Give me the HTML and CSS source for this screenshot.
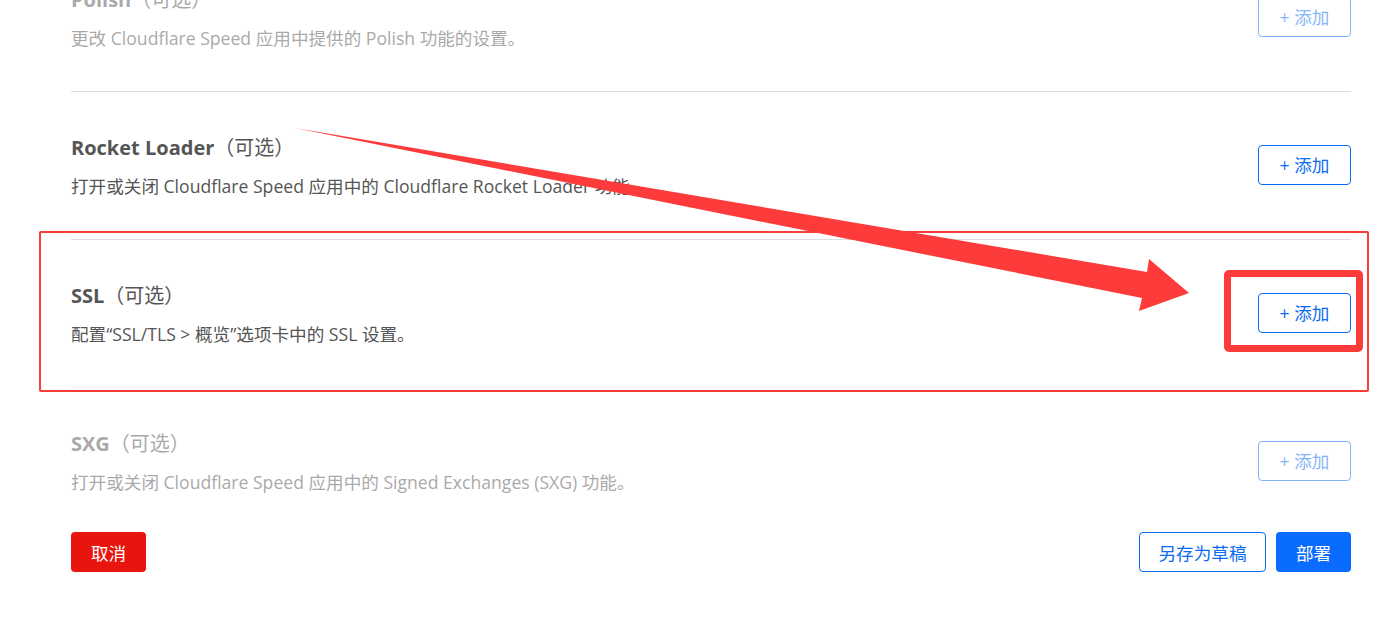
FILE: index.html
```html
<!DOCTYPE html>
<html lang="zh-CN">
<head>
    <meta charset="UTF-8">
    <meta name="viewport" content="width=device-width, initial-scale=1.0">
    <title>配置规则</title>
    <link rel="stylesheet" href="styles.css">
</head>
<body>
    <div class="page">
        <div class="settings">
            <div class="setting faded">
                <div class="info">
                    <div class="title"><b>Polish</b>（可选）</div>
                    <div class="desc">更改 Cloudflare Speed 应用中提供的 Polish 功能的设置。</div>
                </div>
                <button class="btn add">+ 添加</button>
            </div>
            <div class="setting">
                <div class="info">
                    <div class="title"><b>Rocket Loader</b>（可选）</div>
                    <div class="desc">打开或关闭 Cloudflare Speed 应用中的 Cloudflare Rocket Loader 功能。</div>
                </div>
                <button class="btn add">+ 添加</button>
            </div>
            <div class="setting">
                <div class="info">
                    <div class="title"><b>SSL</b>（可选）</div>
                    <div class="desc">配置“SSL/TLS &gt; 概览”选项卡中的 SSL 设置。</div>
                </div>
                <button class="btn add">+ 添加</button>
            </div>
            <div class="setting faded last">
                <div class="info">
                    <div class="title"><b>SXG</b>（可选）</div>
                    <div class="desc">打开或关闭 Cloudflare Speed 应用中的 Signed Exchanges (SXG) 功能。</div>
                </div>
                <button class="btn add">+ 添加</button>
            </div>
        </div>

        <div class="footer">
            <button class="btn cancel">取消</button>
            <div class="actions">
                <button class="btn draft">另存为草稿</button>
                <button class="btn deploy">部署</button>
            </div>
        </div>
    </div>

    <!-- annotations -->
    <div class="mark-row"></div>
    <div class="mark-btn"></div>
    <svg class="arrow" width="1386" height="622" viewBox="0 0 1386 622">
        <polygon points="295,128 1147,272 1149,259 1189,293 1139,311 1142,298" fill="#fd3b3b"/>
    </svg>
</body>
</html>
```

FILE: styles.css
```css
body {
    margin: 0;
    height: 622px;
    overflow: hidden;
    position: relative;
    font-family: "Open Sans", "Noto Sans CJK SC", sans-serif;
    color: #555;
    background: #fff;
}
.page {
    display: flow-root;
    padding: 0 35px 0 71px;
}
.settings {
    margin-top: -57px;
}
.setting {
    display: flex;
    align-items: center;
    justify-content: space-between;
    border-top: 1px solid #ddd;
    padding: 43px 0 40px;
}
.setting.last {
    padding-bottom: 37px;
}
.faded {
    opacity: 0.5;
}
.title {
    font-size: 20px;
    line-height: 26px;
}
.title b {
    font-weight: 700;
}
.desc {
    font-size: 17.6px;
    line-height: 26px;
    margin-top: 12px;
}
.btn {
    font-family: inherit;
    font-size: 17.6px;
    height: 40px;
    border-radius: 4px;
    cursor: pointer;
    padding: 0;
}
.add {
    width: 93px;
    margin-bottom: 5px;
    background: #fff;
    border: 1px solid #0a6cf5;
    color: #0a6cf5;
}
.footer {
    display: flex;
    justify-content: space-between;
}
.actions {
    display: flex;
    gap: 10px;
}
.cancel {
    width: 75px;
    background: #e8150e;
    border: none;
    color: #fff;
}
.draft {
    width: 127px;
    background: #fff;
    border: 1px solid #0a6cf5;
    color: #0a6cf5;
}
.deploy {
    width: 75px;
    background: #0a6cff;
    border: none;
    color: #fff;
}
.mark-row {
    position: absolute;
    left: 39px;
    top: 231px;
    width: 1326px;
    height: 157px;
    border: 2px solid #fd3b3b;
    border-radius: 2px;
}
.mark-btn {
    position: absolute;
    left: 1224px;
    top: 270px;
    width: 125px;
    height: 68px;
    border: 7px solid #fd3b3b;
    border-radius: 5px;
}
.arrow {
    position: absolute;
    left: 0;
    top: 0;
}
```
